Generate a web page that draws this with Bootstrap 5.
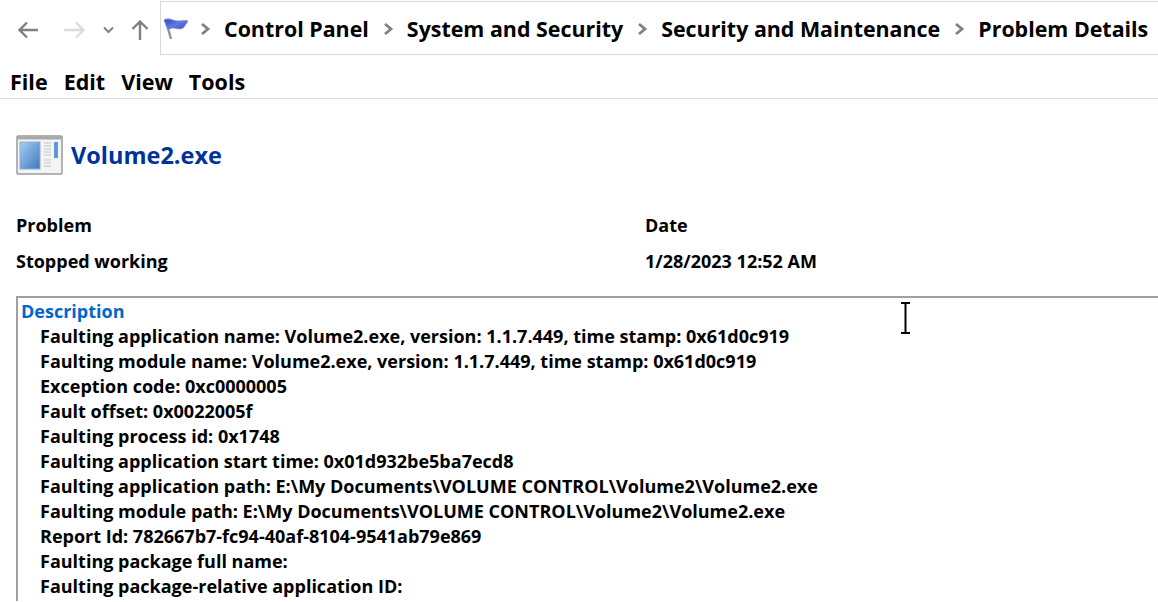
<!DOCTYPE html>
<html>

<head>
  <title>Problem Details</title>
  <link href="https://cdn.jsdelivr.net/npm/bootstrap@5.3.2/dist/css/bootstrap.min.css" rel="stylesheet">
  <style>
    html, body { height: 602px; overflow: hidden; }
    body { background: #fff; color: #000; font-family: "Open Sans", "Noto Sans", sans-serif; font-weight: 700; font-size: 18px; }
    .top-bar { height: 55px; padding-top: 1px; }
    .nav-arrows { width: 160px; flex-shrink: 0; }
    .nav-arrows svg { position: absolute; }
    .address-box { border: 1px solid #d9d9d9; border-right: 0; height: 54px; font-size: 21.4px; white-space: nowrap; padding: 2px 0 0 1px; overflow: hidden; }
    .flag-icon { margin-top: 13px; }
    .crumb-sep { width: 12px; margin: 0 13px; flex-shrink: 0; }
    .menu-row { height: 44px; border-bottom: 1px solid #dcdcdc; padding: 12px 0 0 10px; font-size: 21.5px; gap: 16px; }
    .app-head { height: 55px; margin-top: 29px; padding-left: 16px; }
    .app-title { color: #003399; font-size: 23.5px; margin-left: 8px; }
    .info-row { padding-left: 16px; margin-top: 30px; line-height: 25px; }
    .info-col { width: 629px; }
    .info-row p { margin: 0 0 11px; }
    .desc-box { margin: 11px 0 0 16px; border: 2px solid #a0a0a0; border-right: 0; border-bottom: 0; padding: 1px 0 0 3px; line-height: 25px; height: 305px; white-space: nowrap; }
    .desc-title { color: #0066cc; }
    .desc-lines { padding-left: 19px; }
    .text-cursor { position: absolute; left: 900px; top: 302px; }
  </style>
</head>

<body>
  <div class="top-bar d-flex">
    <div class="nav-arrows position-relative">
      <svg style="left:18px;top:20px" width="21" height="18" viewBox="0 0 21 18" fill="none" stroke="#808080" stroke-width="2.4"><path d="M1 9H20M9 1.500L1.500 9L9 16.500"/></svg>
      <svg style="left:64px;top:20px" width="21" height="18" viewBox="0 0 21 18" fill="none" stroke="#dcdcdc" stroke-width="2.4"><path d="M0 9H19M12 1.500L19.500 9L12 16.500"/></svg>
      <svg style="left:103px;top:25px" width="11" height="8" viewBox="0 0 11 8" fill="none" stroke="#808080" stroke-width="2"><path d="M1 1.500L5.500 6L10 1.500"/></svg>
      <svg style="left:131px;top:19px" width="18" height="21" viewBox="0 0 18 21" fill="none" stroke="#808080" stroke-width="2.400"><path d="M9 20V1.500M1.500 9L9 1.500L16.500 9"/></svg>
    </div>
    <div class="address-box flex-grow-1 d-flex align-items-center">
      <svg width="28" height="24" viewBox="0 0 28 24" class="align-self-start flex-shrink-0 flag-icon">
        <defs><linearGradient id="flagFill" x1="0" y1="0" x2="1" y2="1"><stop offset="0" stop-color="#2f45c0"/><stop offset="0.5" stop-color="#5f78e0"/><stop offset="1" stop-color="#3048b8"/></linearGradient></defs>
        <path d="M4 4L9 22" stroke="#9a9a9a" stroke-width="2.500"/>
        <path d="M2 3C7 0 11 4 16 4C20 4 23 3 26 4C24 7 23 9 21 11C16 14 12 8 6 13Z" fill="url(#flagFill)" stroke="#7f92dc"/>
      </svg>
      <svg class="crumb-sep" style="margin-left:9px" width="12" height="14" viewBox="0 0 12 14" fill="none" stroke="#808080" stroke-width="2.800"><path d="M3 2L9 7L3 12"/></svg>
      <span>Control Panel</span>
      <svg class="crumb-sep" width="12" height="14" viewBox="0 0 12 14" fill="none" stroke="#808080" stroke-width="2.800"><path d="M3 2L9 7L3 12"/></svg>
      <span>System and Security</span>
      <svg class="crumb-sep" width="12" height="14" viewBox="0 0 12 14" fill="none" stroke="#808080" stroke-width="2.800"><path d="M3 2L9 7L3 12"/></svg>
      <span>Security and Maintenance</span>
      <svg class="crumb-sep" width="12" height="14" viewBox="0 0 12 14" fill="none" stroke="#808080" stroke-width="2.800"><path d="M3 2L9 7L3 12"/></svg>
      <span>Problem Details</span>
    </div>
  </div>

  <div class="menu-row d-flex align-items-center">
    <span>File</span><span>Edit</span><span>View</span><span>Tools</span>
  </div>

  <div class="app-head d-flex align-items-center">
    <svg width="47" height="42" viewBox="0 0 47 42">
      <defs><linearGradient id="paneFill" x1="0" y1="0" x2="1" y2="1"><stop offset="0" stop-color="#a5cdf0"/><stop offset="1" stop-color="#3f78c0"/></linearGradient></defs>
      <rect x="1" y="1" width="45" height="38" rx="1" fill="#f4f4f4" stroke="#9a9a9a" stroke-width="1.500"/>
      <rect x="1.500" y="1.500" width="44" height="3" fill="#a8a8a8"/>
      <rect x="4" y="7" width="20" height="27" fill="url(#paneFill)" stroke="#8faccc"/>
      <path d="M28 8H35M28 11H35M28 14H35M28 17H35M28 20H35M28 25H35M28 28H35M28 31H35" stroke="#c4c4c4" stroke-width="1.200"/>
      <rect x="38" y="7" width="4" height="16" fill="#5f9ad6"/>
    </svg>
    <span class="app-title">Volume2.exe</span>
  </div>

  <div class="info-row d-flex">
    <div class="info-col"><p>Problem</p><p>Stopped working</p></div>
    <div><p>Date</p><p>1/28/2023 12:52 AM</p></div>
  </div>

  <div class="desc-box">
    <div class="desc-title">Description</div>
    <div class="desc-lines">
      <div>Faulting application name: Volume2.exe, version: 1.1.7.449, time stamp: 0x61d0c919</div>
      <div>Faulting module name: Volume2.exe, version: 1.1.7.449, time stamp: 0x61d0c919</div>
      <div>Exception code: 0xc0000005</div>
      <div>Fault offset: 0x0022005f</div>
      <div>Faulting process id: 0x1748</div>
      <div>Faulting application start time: 0x01d932be5ba7ecd8</div>
      <div>Faulting application path: E:\My Documents\VOLUME CONTROL\Volume2\Volume2.exe</div>
      <div>Faulting module path: E:\My Documents\VOLUME CONTROL\Volume2\Volume2.exe</div>
      <div>Report Id: 782667b7-fc94-40af-8104-9541ab79e869</div>
      <div>Faulting package full name:</div>
      <div>Faulting package-relative application ID:</div>
    </div>
  </div>

  <svg class="text-cursor" width="11" height="32" viewBox="0 0 11 32" fill="none" stroke="#000" stroke-width="2"><path d="M1 1H10M5.500 1V31M1 31H10"/></svg>

  <script src="https://cdn.jsdelivr.net/npm/bootstrap@5.3.2/dist/js/bootstrap.bundle.min.js"></script>
</body>

</html>
